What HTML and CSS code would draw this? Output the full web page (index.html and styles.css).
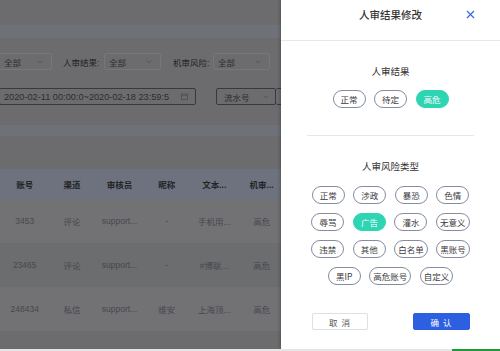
FILE: index.html
```html
<!DOCTYPE html>
<html lang="zh-CN">
<head>
  <meta charset="UTF-8">
  <meta name="viewport" content="width=device-width, initial-scale=1.0">
  <title>人审结果修改</title>
  <link rel="stylesheet" href="styles.css">
</head>
<body>
  <div class="screen">
    <!-- page behind the drawer -->
    <div class="page">
      <div class="page-top"></div>
      <div class="page-band"></div>

      <div class="filters">
        <div class="filter-row">
          <div class="select select-first">
            <span>全部</span>
            <svg class="chevron" width="6" height="4" viewBox="0 0 6 4"><polyline points="0.5,0.5 3,3 5.5,0.5" fill="none" stroke="#9a9aa2" stroke-width="0.8"/></svg>
          </div>
          <label class="filter-label">人审结果:</label>
          <div class="select select-mid">
            <span>全部</span>
            <svg class="chevron" width="6" height="4" viewBox="0 0 6 4"><polyline points="0.5,0.5 3,3 5.5,0.5" fill="none" stroke="#9a9aa2" stroke-width="0.8"/></svg>
          </div>
          <label class="filter-label filter-label-2">机审风险:</label>
          <div class="select select-mid">
            <span>全部</span>
            <svg class="chevron" width="6" height="4" viewBox="0 0 6 4"><polyline points="0.5,0.5 3,3 5.5,0.5" fill="none" stroke="#9a9aa2" stroke-width="0.8"/></svg>
          </div>
        </div>
        <div class="filter-row">
          <div class="select select-date">
            <span>2020-02-11 00:00:0~2020-02-18 23:59:5</span>
            <svg class="calendar" width="7" height="7" viewBox="0 0 7 7"><rect x="0.5" y="1" width="6" height="5.5" fill="none" stroke="#8a8a92" stroke-width="0.7"/><line x1="0.5" y1="2.6" x2="6.5" y2="2.6" stroke="#8a8a92" stroke-width="0.6"/></svg>
          </div>
          <div class="select select-serial">
            <span>流水号</span>
            <svg class="chevron" width="6" height="4" viewBox="0 0 6 4"><polyline points="0.5,0.5 3,3 5.5,0.5" fill="none" stroke="#9a9aa2" stroke-width="0.8"/></svg>
          </div>
          <div class="select select-search"></div>
        </div>
      </div>

      <div class="page-band page-band-2"></div>

      <div class="table">
        <div class="t-row t-head">
          <div>账号</div><div>渠道</div><div>审核员</div><div>昵称</div><div>文本...</div><div>机审...</div>
        </div>
        <div class="t-row">
          <div>3453</div><div>评论</div><div>support...</div><div>-</div><div>手机用...</div><div>高危</div>
        </div>
        <div class="t-row t-row-alt">
          <div>23465</div><div>评论</div><div>support...</div><div>-</div><div>#博联...</div><div>高危</div>
        </div>
        <div class="t-row">
          <div>248434</div><div>私信</div><div>support...</div><div>维安</div><div>上海顶...</div><div>高危</div>
        </div>
      </div>
    </div>

    <div class="mask"></div>

    <!-- drawer -->
    <aside class="drawer">
      <div class="drawer-header">
        <h1 class="drawer-title">人审结果修改</h1>
        <svg class="drawer-close" width="9" height="9" viewBox="0 0 9 9"><line x1="1" y1="1" x2="8" y2="8" stroke="#3b6ce6" stroke-width="1.2"/><line x1="8" y1="1" x2="1" y2="8" stroke="#3b6ce6" stroke-width="1.2"/></svg>
      </div>

      <div class="section">
        <h2 class="section-title">人审结果</h2>
        <div class="chips">
          <span class="chip">正常</span>
          <span class="chip">待定</span>
          <span class="chip chip-active">高危</span>
        </div>
      </div>

      <div class="divider"></div>

      <div class="section section-risk">
        <h2 class="section-title">人审风险类型</h2>
        <div class="chips chips-grid">
          <span class="chip">正常</span>
          <span class="chip">涉政</span>
          <span class="chip">暴恐</span>
          <span class="chip">色情</span>
          <span class="chip">辱骂</span>
          <span class="chip chip-active">广告</span>
          <span class="chip">灌水</span>
          <span class="chip">无意义</span>
          <span class="chip">违禁</span>
          <span class="chip">其他</span>
          <span class="chip">白名单</span>
          <span class="chip">黑账号</span>
          <span class="chip">黑IP</span>
          <span class="chip">高危账号</span>
          <span class="chip">自定义</span>
        </div>
      </div>

      <div class="drawer-footer">
        <button class="btn btn-cancel">取 消</button>
        <button class="btn btn-ok">确 认</button>
      </div>
    </aside>
  </div>
  <div class="statusbar"><span class="status-green"></span></div>
</body>
</html>
```

FILE: styles.css
```css
* {
  box-sizing: border-box;
  margin: 0;
  padding: 0;
}
body {
  width: 500px;
  height: 351px;
  overflow: hidden;
  background-color: #e6e6e6;
  font-family: "Liberation Sans", "Noto Sans CJK SC", sans-serif;
}
.screen {
  position: relative;
  height: 349px;
  overflow: hidden;
}

/* page behind */
.page {
  height: 100%;
  background-color: #cfd0d4;
  color: #56565e;
  font-size: 8px;
}
.page-top {
  height: 25px;
}
.page-band {
  height: 13px;
  background-color: #d3d8e6;
}
.page-band-2 {
  height: 11px;
  margin-top: 20px;
}
.filters {
  padding-top: 15px;
}
.filter-row {
  display: flex;
  align-items: center;
  height: 17px;
  margin-left: -1px;
}
.filter-row + .filter-row {
  margin-top: 18px;
}
.select {
  height: 17px;
  border: 1px solid #e4e4e8;
  border-radius: 2px;
  display: flex;
  align-items: center;
  justify-content: space-between;
  padding: 0 8px 0 4px;
  flex-shrink: 0;
  font-size: 8.5px;
}
.select-first {
  width: 53px;
}
.select-mid {
  width: 57px;
}
.filter-label {
  width: 41px;
  margin-left: 11px;
  color: #44444c;
  font-size: 8.5px;
}
.filter-label-2 {
  width: 40px;
  margin-left: 12px;
}
.select-date {
  width: 197px;
  border-color: #6e6e76;
  padding-right: 7px;
  font-size: 9.2px;
}
.select-serial {
  width: 60px;
  margin-left: 20px;
  border-color: #6e6e76;
  padding-left: 7px;
  padding-right: 6px;
}
.select-search {
  width: 60px;
  border-color: #6e6e76;
  border-left: none;
}

.table {
  margin-top: 33px;
  font-size: 8.5px;
}
.t-row {
  display: grid;
  grid-template-columns: repeat(6, 47.4px);
  height: 44px;
  align-items: center;
  padding-left: 1px;
  background-color: #dadbe0;
  color: #8a8a92;
  text-align: center;
}
.t-row-alt {
  background-color: #d0d1d5;
}
.t-head {
  height: 30px;
  background-color: #d2daf2;
  color: #46464e;
  font-weight: bold;
}

.mask {
  position: absolute;
  inset: 0;
  background-color: rgba(0, 0, 0, 0.48);
}

/* drawer */
.drawer {
  position: absolute;
  top: 0;
  right: 0;
  width: 219px;
  height: 100%;
  background-color: #fff;
  box-shadow: -1px 0 3px rgba(0, 0, 0, 0.25);
  display: flex;
  flex-direction: column;
  font-family: "Noto Sans CJK SC", "Noto Sans", sans-serif;
  color: #333;
}
.drawer-header {
  height: 41px;
  border-bottom: 1px solid #e8e8ec;
  display: flex;
  justify-content: center;
  position: relative;
  padding-top: 9px;
}
.drawer-title {
  font-size: 10.5px;
  font-weight: 500;
  line-height: 12px;
}
.drawer-close {
  position: absolute;
  right: 25px;
  top: 10px;
}
.section {
  padding-top: 24px;
  text-align: center;
}
.section-title {
  font-size: 9.5px;
  font-weight: normal;
  line-height: 12px;
}
.chips {
  display: flex;
  flex-wrap: wrap;
  justify-content: center;
  gap: 9px 8.5px;
  margin: 13px auto 0;
  width: 160px;
}
.chips-grid {
  margin-top: 14px;
}
.chip {
  min-width: 33px;
  height: 18px;
  padding: 0 3px;
  border: 1px solid #858ba0;
  border-radius: 9px;
  font-size: 8.5px;
  line-height: 16px;
  color: #3a3a40;
  text-align: center;
}
.chip-active {
  background-color: #2ed5b3;
  border-color: #2ed5b3;
  color: #fff;
}
.divider {
  height: 1px;
  margin: 27px 26px 0;
  background-color: #e6e6ea;
}
.drawer-footer {
  display: flex;
  justify-content: space-between;
  padding: 0 30px 0 31px;
  margin-top: 28px;
}
.btn {
  width: 57px;
  height: 17px;
  border-radius: 2px;
  font-family: "Noto Sans CJK SC", sans-serif;
  font-size: 8.5px;
  letter-spacing: 1px;
}
.btn-cancel {
  width: 56px;
  background-color: #fff;
  border: 1px solid #dcdfe6;
  color: #555;
}
.btn-ok {
  background-color: #2d60e0;
  border: 1px solid #2d60e0;
  color: #fff;
}

.statusbar {
  height: 2px;
  display: flex;
  justify-content: flex-end;
}
.status-green {
  width: 48px;
  background-color: #1e9a3c;
}
```
